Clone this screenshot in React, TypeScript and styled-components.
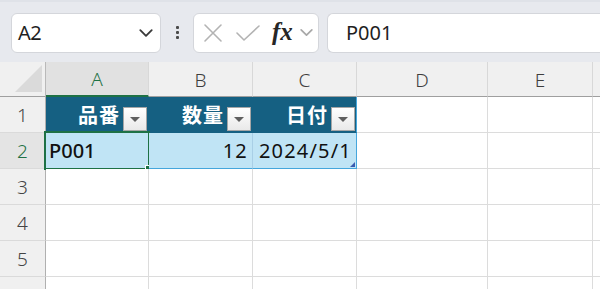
import styled, { createGlobalStyle } from "styled-components";

const GlobalStyle = createGlobalStyle`
  html, body {
    margin: 0;
    padding: 0;
    background: #ffffff;
    overflow: hidden;
  }
  body {
    width: 600px;
    height: 289px;
    font-family: "Noto Sans", "Noto Sans CJK JP", sans-serif;
  }
`;

const SELECT_GREEN = "#1e7145";
const TABLE_DARK = "#156082";
const TABLE_LIGHT = "#c0e4f5";
const TABLE_LINE = "#45a6dc";

const Page = styled.div`
  width: 600px;
  height: 289px;
  display: flex;
  flex-direction: column;
  overflow: hidden;
`;

const FormulaBar = styled.div`
  height: 62px;
  flex: none;
  background: #e7e9ee;
  border-top: 2px solid #dfe2e8;
  box-sizing: border-box;
  display: flex;
  align-items: center;
  padding: 0 0 0 11px;
  gap: 8px;
`;

const Box = styled.div<{ $w?: number }>`
  height: 40px;
  box-sizing: border-box;
  background: #ffffff;
  border: 1px solid #d4d6db;
  border-radius: 6px;
  display: flex;
  align-items: center;
  flex: none;
  width: ${(p) => (p.$w ? `${p.$w}px` : "auto")};
`;

const NameBox = styled(Box)`
  padding: 0 6px 0 6px;
  justify-content: space-between;
  margin-top: 1px;
`;

const NameText = styled.span`
  font-family: "Noto Sans", sans-serif;
  font-size: 20px;
  color: #1f1f1f;
  letter-spacing: -0.5px;
`;

const Dots = styled.div`
  width: 16px;
  display: flex;
  flex-direction: column;
  align-items: center;
  gap: 2px;
  span {
    width: 3px;
    height: 3px;
    background: #4a4a4a;
    border-radius: 1px;
  }
`;

const FxBox = styled(Box)`
  padding: 0 0 0 9px;
  gap: 0;
  margin-top: 1px;
`;

const IconGap = styled.span`
  width: 12px;
  flex: none;
`;

const FxText = styled.span`
  font-family: "Liberation Serif", "DejaVu Serif", serif;
  font-style: italic;
  font-weight: bold;
  font-size: 25px;
  color: #262626;
  margin: -2px 6px 0 11px;
`;

const FormulaInput = styled(Box)`
  flex: 1;
  border-right: none;
  border-radius: 6px 0 0 6px;
  padding-left: 18px;
  margin-top: 1px;
  font-size: 20px;
  color: #1f1f1f;
`;

const Sheet = styled.div`
  flex: 1;
  display: grid;
  grid-template-columns: 46px 103px 104px 104px 131px 105px 1fr;
  grid-template-rows: 35px repeat(6, 36px);
  background: #ffffff;
`;

const Corner = styled.div`
  background: #f0f0f0;
  border-right: 1px solid #b9b9b9;
  border-bottom: 1px solid #9f9f9f;
  display: flex;
  align-items: flex-end;
  justify-content: flex-end;
  padding: 0 3px 4px 0;
  box-sizing: border-box;
`;

const ColHead = styled.div<{ $active?: boolean }>`
  background: ${(p) => (p.$active ? "#e1e1e1" : "#f0f0f0")};
  color: ${(p) => (p.$active ? SELECT_GREEN : "#3d3d3d")};
  border-right: 1px solid #d8d8d8;
  border-bottom: ${(p) => (p.$active ? `2px solid ${SELECT_GREEN}` : "1px solid #9f9f9f")};
  box-sizing: border-box;
  display: flex;
  align-items: center;
  justify-content: center;
  font-family: "Noto Sans", sans-serif;
  font-size: 19px;
  font-weight: 300;
  padding-top: 1px;
`;

const RowHead = styled.div<{ $active?: boolean }>`
  background: ${(p) => (p.$active ? "#e4e4e4" : "#f0f0f0")};
  color: ${(p) => (p.$active ? SELECT_GREEN : "#444444")};
  border-right: 1px solid #b0b0b0;
  border-bottom: 1px solid #dadada;
  box-sizing: border-box;
  display: flex;
  align-items: center;
  justify-content: center;
  font-family: "Noto Sans", sans-serif;
  font-size: 19px;
  font-weight: 300;
`;

const Cell = styled.div<{ $kind?: "head" | "data" | "plain"; $right?: boolean }>`
  position: relative;
  box-sizing: border-box;
  display: flex;
  align-items: center;
  justify-content: ${(p) => (p.$right ? "flex-end" : "flex-start")};
  padding: ${(p) => (p.$kind === "head" ? "0 1px 0 4px" : "0 4px 0 3px")};
  background: ${(p) =>
    p.$kind === "head" ? TABLE_DARK : p.$kind === "data" ? TABLE_LIGHT : "#ffffff"};
  border-right: 1px solid
    ${(p) => (p.$kind === "head" ? TABLE_DARK : p.$kind === "data" ? "#a9cfe6" : "#dcdcdc")};
  border-bottom: 1px solid
    ${(p) => (p.$kind === "head" ? TABLE_DARK : p.$kind === "data" ? TABLE_LINE : "#dcdcdc")};
  font-family: "Noto Sans", "Noto Sans CJK JP", sans-serif;
  font-size: 20px;
  color: #111111;
`;

const EdgeCell = styled(Cell)`
  border-right-color: ${TABLE_LINE};
`;

const HeadLabel = styled.span`
  font-family: "Noto Sans CJK JP", sans-serif;
  font-weight: 700;
  font-size: 20px;
  color: #ffffff;
  margin-right: 3px;
  letter-spacing: 1px;
`;

const FilterButton = styled.div`
  align-self: flex-end;
  margin-bottom: 1px;
  width: 24px;
  height: 24px;
  flex: none;
  box-sizing: border-box;
  border: 1px solid #a6a6a6;
  background: linear-gradient(#ffffff, #e9e9e9);
  display: flex;
  align-items: center;
  justify-content: center;
  &::after {
    content: "";
    width: 0;
    height: 0;
    border-left: 5px solid transparent;
    border-right: 5px solid transparent;
    border-top: 5px solid #5f5f5f;
    margin-top: 1px;
  }
`;

const Selection = styled.div`
  position: absolute;
  left: -2px;
  top: -2px;
  right: -2px;
  bottom: -2px;
  border: 2px solid ${SELECT_GREEN};
  pointer-events: none;
`;

const FillHandle = styled.div`
  position: absolute;
  right: -5px;
  bottom: -5px;
  width: 7px;
  height: 7px;
  background: ${SELECT_GREEN};
  border: 1px solid #ffffff;
  border-right: none;
  border-bottom: none;
`;

const ResizeMark = styled.div`
  position: absolute;
  right: 1px;
  bottom: 1px;
  width: 0;
  height: 0;
  border-left: 5px solid transparent;
  border-bottom: 5px solid #3b5bb0;
`;

const CellText = styled.span<{ $strong?: boolean }>`
  font-weight: ${(p) => (p.$strong ? 500 : 400)};
  letter-spacing: ${(p) => (p.$strong ? "0" : "1.2px")};
  position: relative;
  z-index: 1;
`;

function Chevron({ size = 14, color = "#3a3a3a" }: { size?: number; color?: string }) {
  return (
    <svg width={size} height={size} viewBox="0 0 14 14" fill="none">
      <path d="M2 4.5 L7 9.5 L12 4.5" stroke={color} strokeWidth="1.6" strokeLinecap="round" strokeLinejoin="round" />
    </svg>
  );
}

function CrossIcon() {
  return (
    <svg width="20" height="20" viewBox="0 0 20 20" fill="none">
      <path d="M2 2 L18 18 M18 2 L2 18" stroke="#b3b3b3" strokeWidth="1.6" strokeLinecap="round" />
    </svg>
  );
}

function CheckIcon() {
  return (
    <svg width="26" height="20" viewBox="0 0 26 20" fill="none">
      <path d="M2 10 L9 17 L24 3" stroke="#b3b3b3" strokeWidth="1.6" strokeLinecap="round" strokeLinejoin="round" />
    </svg>
  );
}

function CornerTriangle() {
  return (
    <svg width="27" height="27" viewBox="0 0 27 27">
      <polygon points="27,0 27,27 0,27" fill="#dadada" />
    </svg>
  );
}

const columns = ["A", "B", "C", "D", "E", ""];

export default function App() {
  return (
    <>
      <GlobalStyle />
      <Page>
        <FormulaBar>
          <NameBox $w={150}>
            <NameText>A2</NameText>
            <Chevron size={16} />
          </NameBox>
          <Dots>
            <span />
            <span />
            <span />
          </Dots>
          <FxBox $w={126}>
            <CrossIcon />
            <IconGap />
            <CheckIcon />
            <FxText>fx</FxText>
            <Chevron size={15} color="#a8a8a8" />
          </FxBox>
          <FormulaInput>P001</FormulaInput>
        </FormulaBar>

        <Sheet>
          <Corner>
            <CornerTriangle />
          </Corner>
          {columns.map((c, i) => (
            <ColHead key={`h${i}`} $active={c === "A"}>
              {c}
            </ColHead>
          ))}

          <RowHead>1</RowHead>
          <Cell $kind="head" $right>
            <HeadLabel>品番</HeadLabel>
            <FilterButton />
          </Cell>
          <Cell $kind="head" $right>
            <HeadLabel>数量</HeadLabel>
            <FilterButton />
          </Cell>
          <EdgeCell $kind="head" $right>
            <HeadLabel>日付</HeadLabel>
            <FilterButton />
          </EdgeCell>
          <Cell $kind="plain" />
          <Cell $kind="plain" />
          <Cell $kind="plain" />

          <RowHead $active>2</RowHead>
          <Cell $kind="data">
            <CellText $strong>P001</CellText>
            <Selection>
              <FillHandle />
            </Selection>
          </Cell>
          <Cell $kind="data" $right>
            <CellText>12</CellText>
          </Cell>
          <EdgeCell $kind="data" $right>
            <CellText>2024/5/1</CellText>
            <ResizeMark />
          </EdgeCell>
          <Cell $kind="plain" />
          <Cell $kind="plain" />
          <Cell $kind="plain" />

          {[3, 4, 5, 6].flatMap((r) => [
            <RowHead key={`r${r}`}>{r}</RowHead>,
            ...columns.map((_, i) => <Cell key={`c${r}-${i}`} $kind="plain" />),
          ])}
        </Sheet>
      </Page>
    </>
  );
}
